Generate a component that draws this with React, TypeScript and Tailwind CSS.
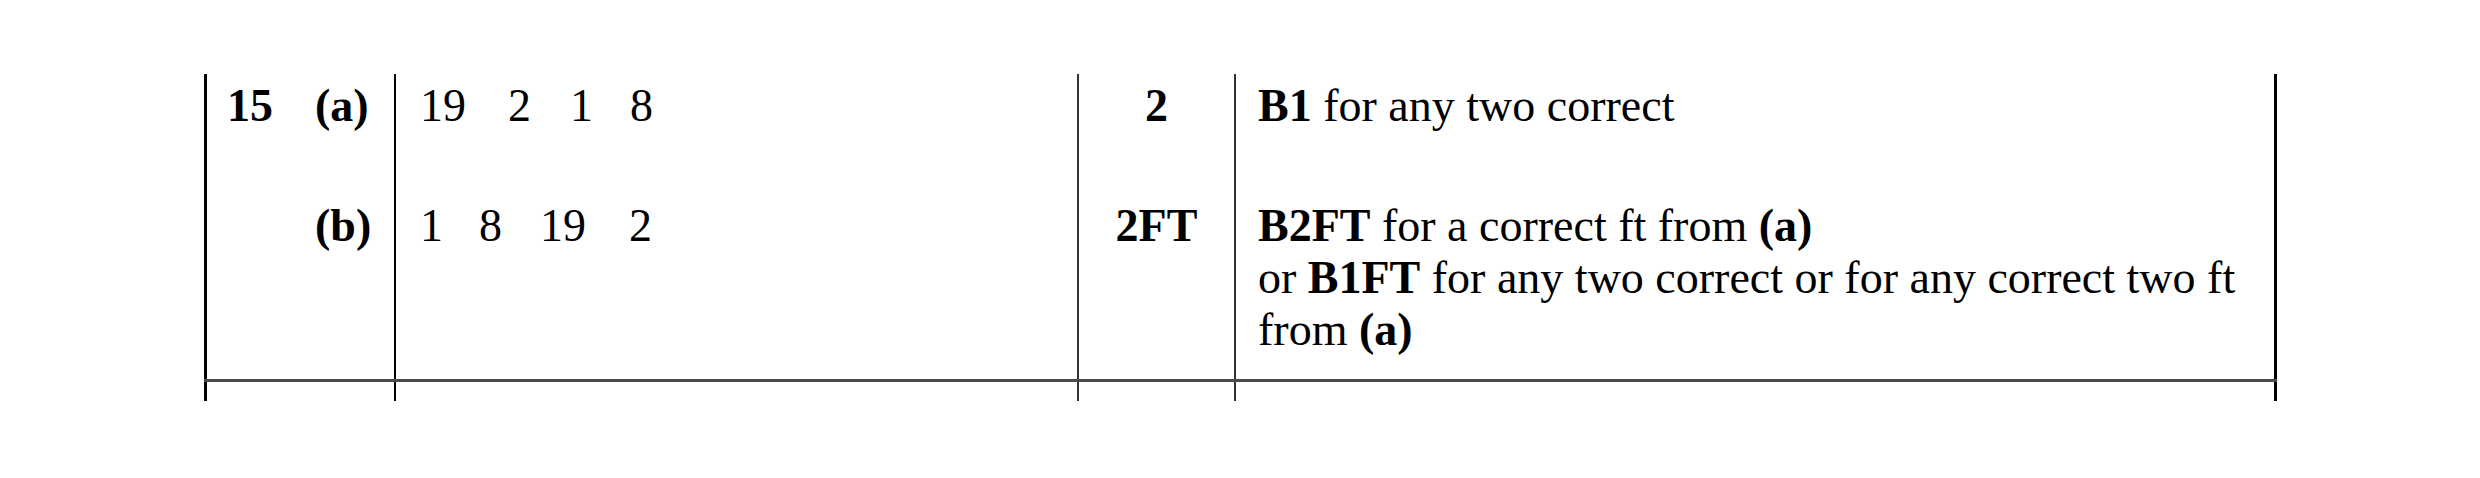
import React from "react";

const serif = { fontFamily: '"Liberation Serif", "Times New Roman", serif' };

function Cell({
  w,
  left = "border-l-2 border-[#222]",
  className = "",
  children,
}: {
  w: string;
  left?: string;
  className?: string;
  children?: React.ReactNode;
}) {
  return <div className={`${w} shrink-0 ${left} ${className}`}>{children}</div>;
}

function Row({
  h,
  pt,
  c1,
  c2,
  c3,
  c4,
}: {
  h: string;
  pt: string;
  c1?: React.ReactNode;
  c2?: React.ReactNode;
  c3?: React.ReactNode;
  c4?: React.ReactNode;
}) {
  return (
    <div className={`flex ${h}`}>
      <Cell w="w-[190px]" left="border-l-[3px] border-black" className={`${pt} pl-[20px]`}>
        {c1}
      </Cell>
      <Cell w="w-[683px]" left="border-l-2 border-black" className={`${pt} pl-[24px]`}>
        {c2}
      </Cell>
      <Cell w="w-[157px]" left="border-l-2 border-[#333]" className={`${pt} text-center font-bold`}>
        {c3}
      </Cell>
      <Cell
        w="w-[1043px]"
        left="border-l-2 border-[#333] border-r-[3px] border-r-black"
        className={`${pt} pl-[22px] pr-[10px]`}
      >
        {c4}
      </Cell>
    </div>
  );
}

export default function App() {
  return (
    <div className="w-[2480px] h-[478px] bg-white text-black overflow-hidden" style={serif}>
      <div className="ml-[204px] pt-[74px] w-[2073px] text-[46px] leading-[52px]">
        <Row
          h="h-[126px]"
          pt="pt-[6px]"
          c1={
            <div className="flex font-bold">
              <span className="w-[88px]">15</span>
              <span>(a)</span>
            </div>
          }
          c2={
            <div className="flex">
              <span>19</span>
              <span className="ml-[42px]">2</span>
              <span className="ml-[39px]">1</span>
              <span className="ml-[37px]">8</span>
            </div>
          }
          c3={<span>2</span>}
          c4={
            <div>
              <b>B1</b> for any two correct
            </div>
          }
        />
        <Row
          h="h-[179px]"
          pt="pt-0"
          c1={
            <div className="flex font-bold">
              <span className="w-[88px]"></span>
              <span>(b)</span>
            </div>
          }
          c2={
            <div className="flex">
              <span>1</span>
              <span className="ml-[36px]">8</span>
              <span className="ml-[38px]">19</span>
              <span className="ml-[43px]">2</span>
            </div>
          }
          c3={<span>2FT</span>}
          c4={
            <div className="whitespace-nowrap">
              <b>B2FT</b> for a correct ft from <b>(a)</b>
              <br />
              or <b>B1FT</b> for any two correct or for any correct two ft
              <br />
              from <b>(a)</b>
            </div>
          }
        />
        <div className="h-[3px] w-[2073px] bg-[#4a4a4a]"></div>
        <Row h="h-[19px]" pt="pt-0" />
      </div>
    </div>
  );
}
